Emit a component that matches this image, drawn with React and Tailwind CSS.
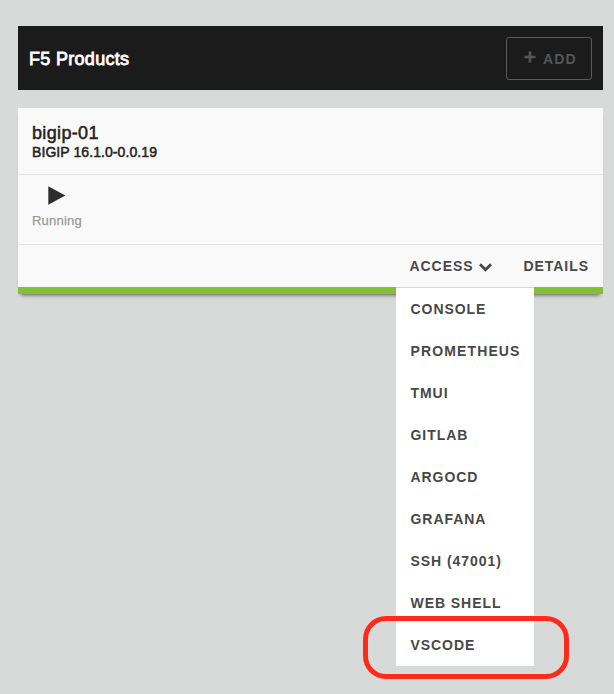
const menuItems = [
  { label: 'CONSOLE' },
  { label: 'PROMETHEUS', className: 'tracking-[1.13px]' },
  { label: 'TMUI' },
  { label: 'GITLAB' },
  { label: 'ARGOCD' },
  { label: 'GRAFANA' },
  { label: 'SSH (47001)' },
  { label: 'WEB SHELL' },
  { label: 'VSCODE' },
];

function AccessMenu() {
  return (
    <div className="absolute left-[-13px] top-[42px] z-10 w-[138px] border-t border-[#d4d4d4] bg-white">
      <ul>
        {menuItems.map(({ label, className = '' }) => (
          <li key={label} className={`flex h-[42px] items-center pl-3.5 whitespace-nowrap ${className}`}>
            {label}
          </li>
        ))}
      </ul>
      <div className="absolute bottom-[-13px] left-[-33px] h-[63px] w-[206px] rounded-[23px] border-5 border-[#ff2a1a]" />
    </div>
  );
}

export default function App() {
  return (
    <div className="h-[694px] w-[614px] overflow-hidden bg-[#d8dad9] pt-[26px] pr-[11px] pl-[18px] font-['Liberation_Sans',Arial,sans-serif]">
      <header className="flex h-16 items-center justify-between bg-[#1b1b1b] pr-[11px] pl-[11px]">
        <h1 className="pt-0.5 text-[18px] leading-6 tracking-[0.3px] text-white [-webkit-text-stroke:0.8px_white]">
          F5 Products
        </h1>
        <button className="flex h-[43px] w-[86px] items-center rounded-[3px] border border-[#5a5a5a] pl-[17px] text-sm font-bold tracking-[1.1px] text-[#555]">
          <svg className="mr-[7px] -mt-0.5 h-3 w-3" viewBox="0 0 12 12" fill="none" stroke="currentColor" strokeWidth="2.7">
            <path d="M6 .5v11M.5 6h11" />
          </svg>
          <span className="pt-0.5">ADD</span>
        </button>
      </header>

      <section className="mt-[18px] h-[186px] border-b-[7px] border-[#83c036] bg-[#f9f9f9] shadow-[0_4px_4px_-3px_rgba(0,0,0,0.6)]">
        <div className="h-[67px] border-b border-[#e5e5e5] pt-[15px] pl-3.5 text-[#222]">
          <h2 className="text-[18px] leading-5 tracking-[0.35px] [-webkit-text-stroke:0.5px_#222]">bigip-01</h2>
          <p className="text-sm leading-[18px] tracking-[0.08px] [-webkit-text-stroke:0.5px_#222]">
            BIGIP 16.1.0-0.0.19
          </p>
        </div>
        <div className="h-[70px] border-b border-[#e5e5e5] pt-[11px] pl-3.5">
          <svg className="ml-4 h-[19px] w-[18px]" viewBox="0 0 18 19" fill="#2d2d2d">
            <path d="M.3.3 17.3 9.5.3 18.7Z" />
          </svg>
          <p className="mt-[7px] text-[13px] leading-[18px] tracking-[0.22px] text-[#999] [-webkit-text-stroke:0.25px_#999]">
            Running
          </p>
        </div>
        <div className="flex h-[42px] items-center justify-end pr-3.5 text-sm leading-[42px] font-bold tracking-[0.95px] text-[#484848]">
          <div className="relative mr-[31px] flex h-[42px] w-[83px] items-center justify-between">
            ACCESS
            <svg className="mt-0.5 h-[9px] w-[13px]" viewBox="0 0 13 9" fill="none" stroke="currentColor" strokeWidth="2.8">
              <path d="m1 1.2 5.5 5.5L12 1.2" />
            </svg>
            <AccessMenu />
          </div>
          <a>DETAILS</a>
        </div>
      </section>
    </div>
  );
}
